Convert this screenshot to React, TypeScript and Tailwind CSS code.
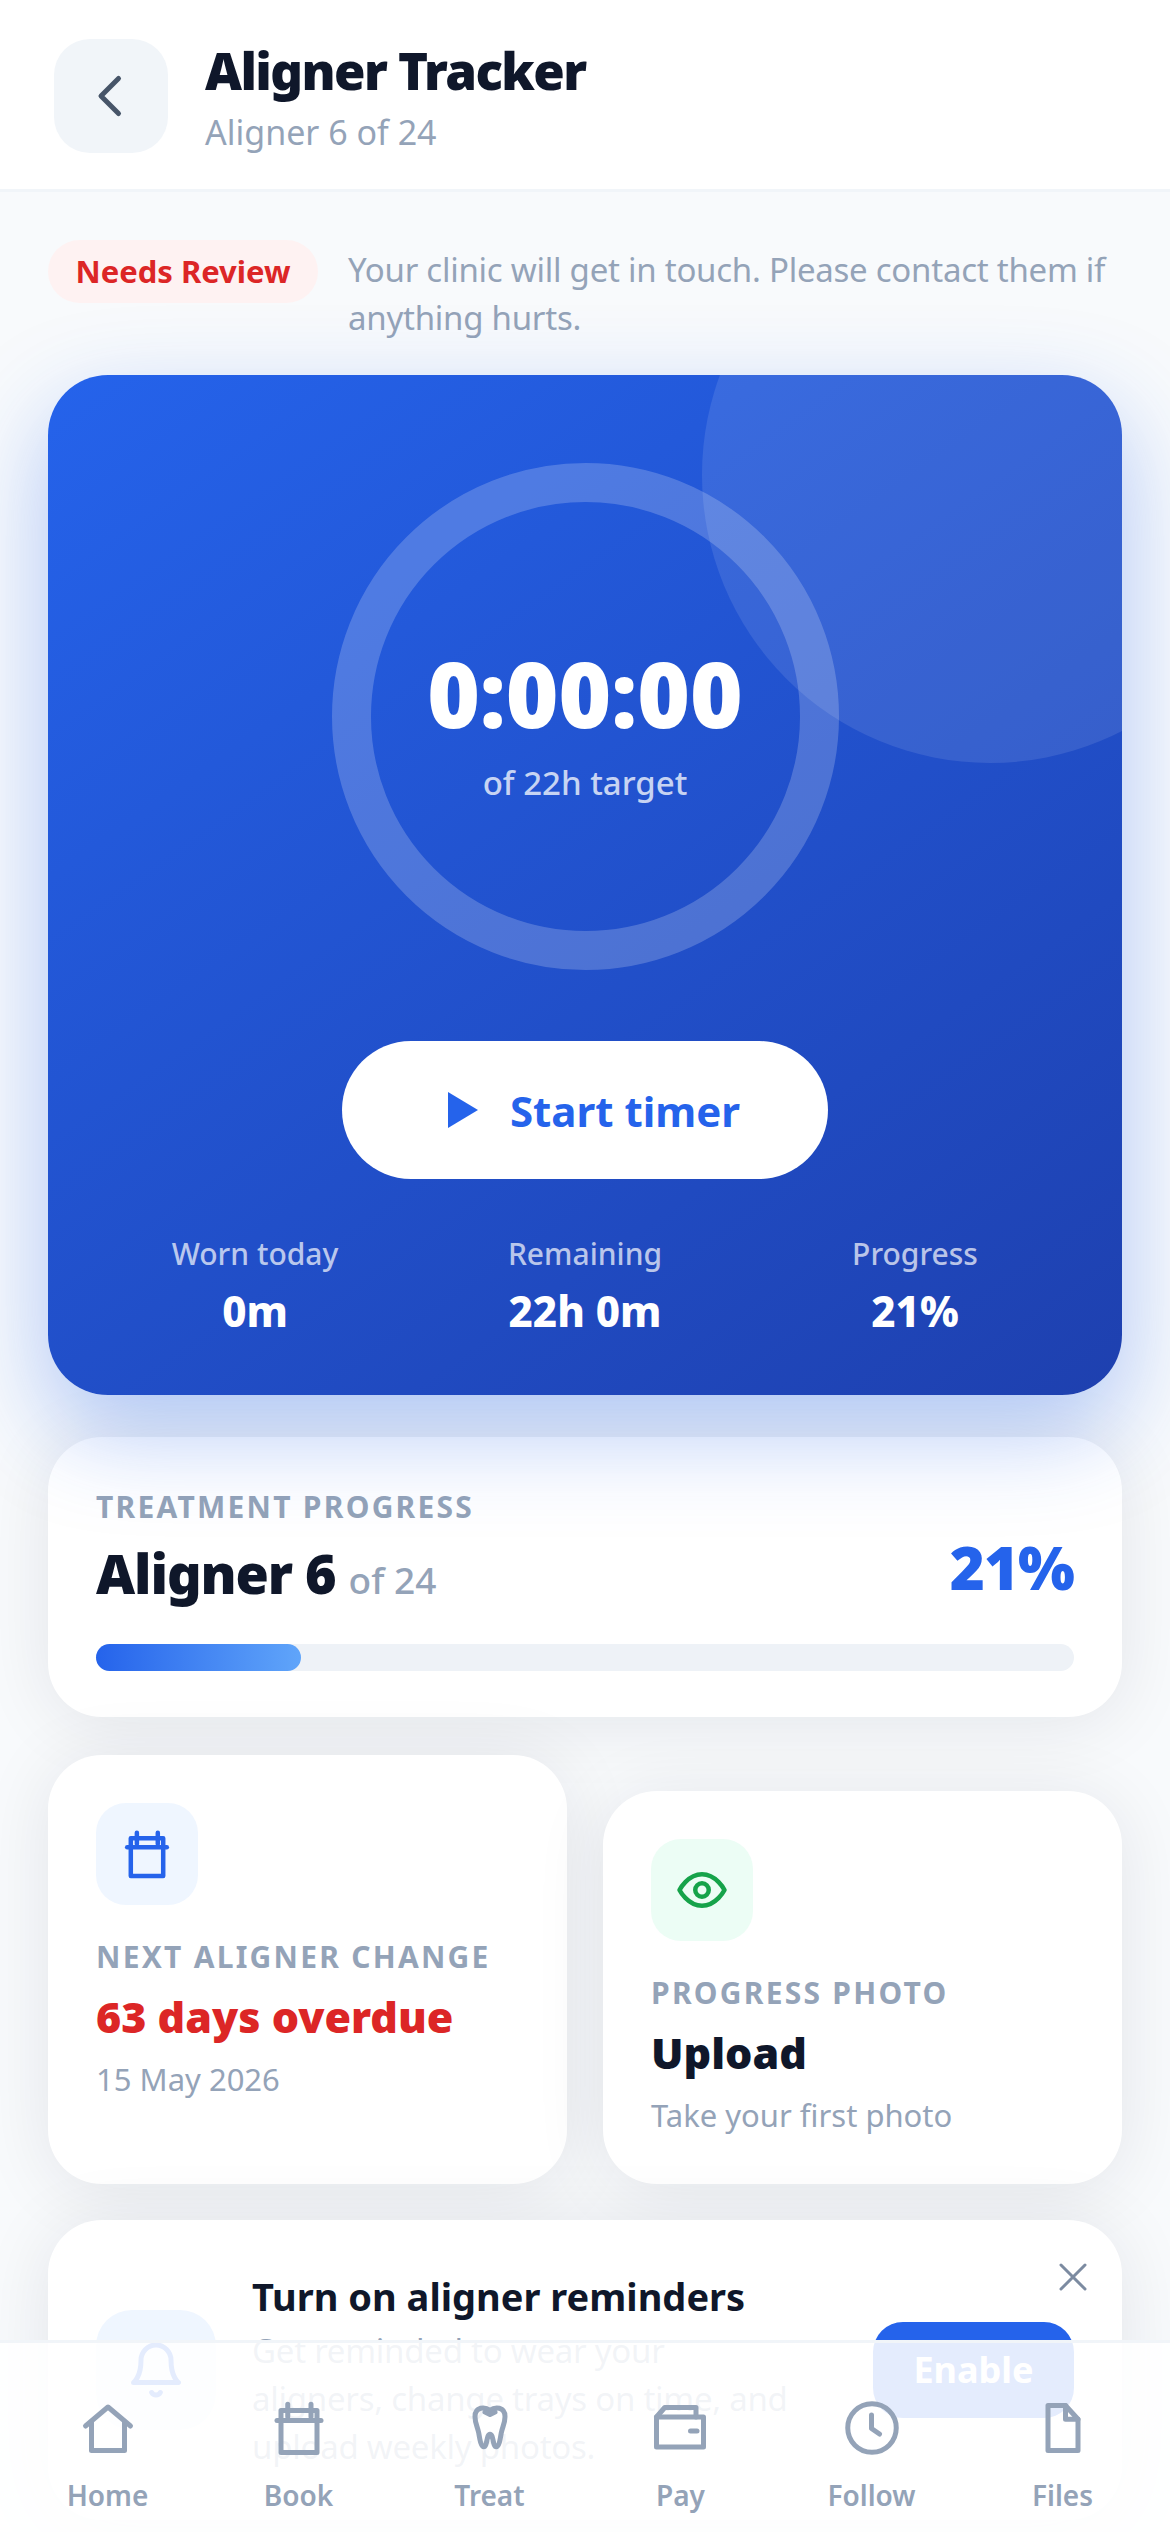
const navItems = [
  {
    label: 'Home',
    icon: (
      <>
        <path d="M3 11.2 12 3.6l9 7.600" />
        <path d="M5.400 9.600V21h13.200V9.600" />
      </>
    ),
  },
  {
    label: 'Book',
    icon: <CalendarShape />,
  },
  {
    label: 'Treat',
    icon: (
      <>
        <path d="M12 5C10 3.400 6 3.400 6 7.500 6 10 7 11.500 7.500 14c.5 3 1 5.500 2 5.500 1.500 0 1-5 2.500-5s1 5 2.500 5c1 0 1.500-2.500 2-5.500.5-2.500 1.500-4 1.500-6.500C18 3.400 14 3.400 12 5Z" />
        <path d="M10 5.600 12 6.600l2-1" />
      </>
    ),
  },
  {
    label: 'Pay',
    icon: (
      <>
        <path d="M2.200 7.600h18.800v12H2.200z" />
        <path d="M2.200 7.600 5.500 3.800H18v3.800" />
        <path d="M15.800 13.200h2.600" />
      </>
    ),
  },
  {
    label: 'Follow',
    icon: (
      <>
        <circle cx="12" cy="12" r="9.700" />
        <path d="M11.800 6.800v5.400l3.200 2.200" />
      </>
    ),
  },
  {
    label: 'Files',
    icon: (
      <>
        <path d="M6 3h7l5 5.500V21H6z" />
        <path d="M13 3v5.500h5" />
      </>
    ),
  },
];

const stats = [
  { label: 'Worn today', value: '0m' },
  { label: 'Remaining', value: '22h 0m' },
  { label: 'Progress', value: '21%' },
];

function CalendarShape() {
  return (
    <>
      <path d="M4.800 5h14.400v16.800H4.800z" />
      <path d="M3.200 9h17.600" />
      <path d="M7.500 2.500v5M16.800 2.500v5" />
    </>
  );
}

function StrokeIcon({ children, className }: { children: React.ReactNode; className: string }) {
  return (
    <svg viewBox="0 0 24 24" fill="none" stroke="currentColor" strokeWidth="2" strokeLinecap="round" strokeLinejoin="round" className={className}>
      {children}
    </svg>
  );
}

export default function App() {
  return (
    <div className="relative h-[2532px] w-[1170px] overflow-hidden bg-[#f8fafc] font-['Noto_Sans',sans-serif]">
      <header className="flex h-[192px] items-center gap-[37px] border-b-[3px] border-[#f1f5f9] bg-white pt-[3px] pl-[54px]">
        <button className="flex h-[114px] w-[114px] items-center justify-center rounded-[36px] bg-[#f1f5f9] text-[#475569]">
          <StrokeIcon className="h-[60px] w-[60px]"><path d="m15 5-7 7 7 7" /></StrokeIcon>
        </button>
        <div className="mt-[4px]">
          <h1 className="text-[51px] leading-[60px] font-black tracking-[-1.6px] text-[#0f172a]">Aligner Tracker</h1>
          <p className="mt-[8px] text-[34px] leading-[48px] text-[#94a3b8]">Aligner 6 of 24</p>
        </div>
      </header>

      <main className="px-[48px] pt-[48px]">
        <div className="flex items-start gap-[30px]">
          <span className="flex h-[63px] w-[270px] shrink-0 items-center justify-center rounded-full bg-[#fef2f2] text-[31px] font-bold text-[#dc2626]">Needs Review</span>
          <p className="pt-[6px] text-[33px] leading-[48px] tracking-[-0.25px] text-[#94a3b8]">Your clinic will get in touch. Please contact them if anything hurts.</p>
        </div>

        <section className="relative mt-[33px] h-[1020px] overflow-hidden rounded-[60px] bg-[linear-gradient(145deg,#2563eb,#1e40af)] pt-[88px] shadow-[0_36px_96px_rgba(37,99,235,0.35)]">
          <div className="absolute top-[-188px] right-[-156px] h-[576px] w-[576px] rounded-full bg-white/10" />
          <div className="relative mx-auto flex h-[507px] w-[507px] flex-col items-center justify-center rounded-full border-[39px] border-white/20 pt-[12px]">
            <div className="text-[90px] leading-[108px] font-black text-white">0:00:00</div>
            <div className="mt-[12px] text-[33px] leading-[48px] font-medium text-white/75">of 22h target</div>
          </div>
          <button className="relative mx-auto mt-[71px] flex h-[138px] w-[486px] items-center justify-center gap-[32px] rounded-full bg-white pl-[18px] text-[42px] font-bold text-[#2563eb]">
            <svg viewBox="0 0 30 36" className="h-[36px] w-[30px] fill-current"><path d="M0 0 30 18 0 36z" /></svg>
            Start timer
          </button>
          <div className="relative mt-[51px] grid grid-cols-3 px-[42px]">
            {stats.map((stat) => (
              <div key={stat.label} className="text-center">
                <div className="text-[30px] leading-[48px] font-medium text-white/70">{stat.label}</div>
                <div className="mt-[6px] text-[42px] leading-[54px] font-extrabold text-white">{stat.value}</div>
              </div>
            ))}
          </div>
        </section>

        <section className="mt-[42px] h-[280px] rounded-[54px] bg-white px-[48px] pt-[50px] shadow-[0_6px_72px_rgba(15,23,42,0.09)]">
          <div className="text-[30px] leading-[40px] font-bold tracking-[2.25px] text-[#94a3b8]">TREATMENT PROGRESS</div>
          <div className="mt-[10px] flex items-start justify-between">
            <div className="text-[54px] leading-[72px] font-black tracking-[-1.1px] text-[#0f172a]">Aligner 6 <span className="text-[37px] font-medium tracking-normal text-[#94a3b8]">of 24</span></div>
            <div className="-mt-[6px] text-[60px] leading-[72px] font-black tracking-[-1px] text-[#2563eb]">21%</div>
          </div>
          <div className="mt-[28px] h-[27px] rounded-full bg-[#eef2f7]">
            <div className="h-full w-[21%] rounded-full bg-[linear-gradient(90deg,#2563eb,#60a5fa)]" />
          </div>
        </section>

        <div className="mt-[38px] grid grid-cols-2 items-end gap-[36px]">
          <div className="rounded-[54px] bg-white p-[48px] pb-[81px] shadow-[0_6px_72px_rgba(15,23,42,0.09)]">
            <div className="flex h-[102px] w-[102px] items-center justify-center rounded-[30px] bg-[#eff6ff] text-[#2563eb]">
              <StrokeIcon className="h-[54px] w-[54px]"><CalendarShape /></StrokeIcon>
            </div>
            <div className="mt-[32px] text-[30px] leading-[40px] font-bold tracking-[2.25px] text-[#94a3b8]">NEXT ALIGNER CHANGE</div>
            <div className="mt-[10px] text-[43px] leading-[60px] font-black text-[#dc2626]">63 days overdue</div>
            <div className="mt-[8px] text-[31px] leading-[48px] text-[#94a3b8]">15 May 2026</div>
          </div>
          <div className="rounded-[54px] bg-white p-[48px] pb-[45px] shadow-[0_6px_72px_rgba(15,23,42,0.09)]">
            <div className="flex h-[102px] w-[102px] items-center justify-center rounded-[30px] bg-[#ecfdf5] text-[#16a34a]">
              <StrokeIcon className="h-[54px] w-[54px]">
                <path d="M2 12s3.600-7 10-7 10 7 10 7-3.600 7-10 7-10-7-10-7Z" />
                <circle cx="12" cy="12" r="3" />
              </StrokeIcon>
            </div>
            <div className="mt-[32px] text-[30px] leading-[40px] font-bold tracking-[2.25px] text-[#94a3b8]">PROGRESS PHOTO</div>
            <div className="mt-[10px] text-[43px] leading-[60px] font-black text-[#0f172a]">Upload</div>
            <div className="mt-[8px] text-[31px] leading-[48px] text-[#94a3b8]">Take your first photo</div>
          </div>
        </div>

        <section className="relative mt-[36px] flex h-[300px] items-center gap-[36px] rounded-[54px] bg-white px-[48px] shadow-[0_6px_72px_rgba(15,23,42,0.09)]">
          <div className="flex h-[120px] w-[120px] shrink-0 items-center justify-center rounded-[36px] bg-[#eff6ff] text-[#2563eb]">
            <StrokeIcon className="h-[60px] w-[60px]">
              <path d="M6 8a6 6 0 0 1 12 0c0 7 3 9 3 9H3s3-2 3-9" />
              <path d="M13.730 21a2 2 0 0 1-3.460 0" />
            </StrokeIcon>
          </div>
          <div className="w-[585px]">
            <div className="text-[38px] leading-[54px] font-bold text-[#0f172a]">Turn on aligner reminders</div>
            <p className="mt-[4px] text-[33px] leading-[48px] tracking-[-0.25px] text-[#94a3b8]">Get reminded to wear your<br />aligners, change trays on time, and<br />upload weekly photos.</p>
          </div>
          <button className="h-[96px] w-[201px] shrink-0 rounded-[30px] bg-[#2563eb] text-[36px] font-bold text-white">Enable</button>
          <StrokeIcon className="absolute top-[33px] right-[25px] h-[48px] w-[48px] stroke-[1.500px] text-[#7c8ba1]"><path d="M18 6 6 18M6 6l12 12" /></StrokeIcon>
        </section>
      </main>

      <nav className="absolute right-0 bottom-0 left-0 grid h-[192px] grid-cols-6 items-start border-t-[3px] border-[#f1f5f9] bg-white/[0.88] px-[12px] pt-[55px]">
        {navItems.map((item) => (
          <div key={item.label} className="flex flex-col items-center">
            <StrokeIcon className="h-[60px] w-[60px] text-[#94a3b8]">{item.icon}</StrokeIcon>
            <span className="mt-[16px] text-[28px] leading-[42px] font-semibold text-[#94a3b8]">{item.label}</span>
          </div>
        ))}
      </nav>
    </div>
  );
}
